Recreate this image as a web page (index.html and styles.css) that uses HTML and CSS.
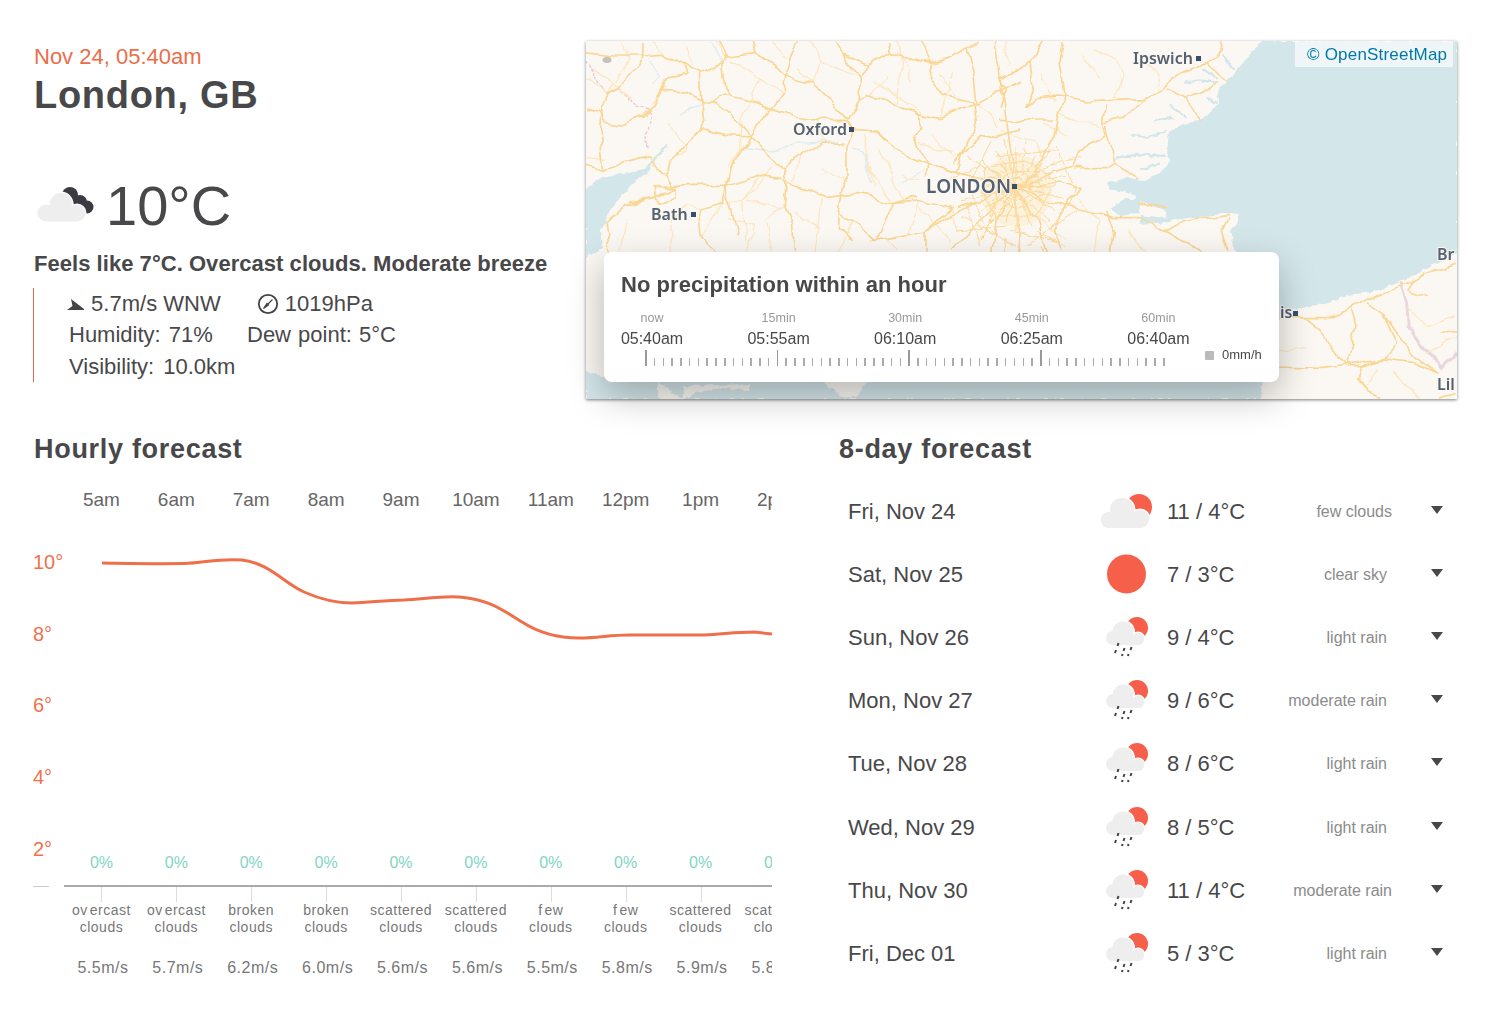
FILE: index.html
```html
<!DOCTYPE html>
<html lang="en">
<head>
    <meta charset="UTF-8">
    <meta name="viewport" content="width=device-width, initial-scale=1.0">
    <title>London, GB weather</title>
    <link rel="stylesheet" href="styles.css">
</head>

<body>
    <svg class="defs" width="0" height="0">
        <filter id="wiggle" x="0" y="0" width="871" height="358" filterUnits="userSpaceOnUse">
            <feTurbulence type="fractalNoise" baseFrequency=".045" numOctaves="2" seed="4"/>
            <feDisplacementMap in="SourceGraphic" scale="11" xChannelSelector="R" yChannelSelector="G"/>
        </filter>
        <filter id="wiggle-fine" x="0" y="0" width="871" height="358" filterUnits="userSpaceOnUse">
            <feTurbulence type="fractalNoise" baseFrequency=".14" numOctaves="2" seed="9"/>
            <feDisplacementMap in="SourceGraphic" scale="5" xChannelSelector="R" yChannelSelector="G"/>
        </filter>
        <symbol id="few-clouds" viewBox="0 0 55 44">
            <circle cx="39" cy="18" r="13" fill="#f65f4a"/>
            <g fill="#eee" stroke="#fff" stroke-width="3" paint-order="stroke">
                <circle cx="22" cy="21" r="12"/>
                <circle cx="9" cy="31" r="8"/>
                <circle cx="40" cy="30" r="9"/>
            </g>
            <g fill="#eee">
                <circle cx="22" cy="21" r="12"/>
                <circle cx="9" cy="31" r="8"/>
                <circle cx="40" cy="30" r="9"/>
                <rect x="9" y="26" width="31" height="13"/>
            </g>
        </symbol>
        <symbol id="rain" viewBox="0 0 55 44">
            <circle cx="37" cy="13" r="11" fill="#f65f4a"/>
            <g fill="#eee" stroke="#fff" stroke-width="3" paint-order="stroke">
                <circle cx="23" cy="17" r="10.5"/>
                <circle cx="38" cy="24" r="6"/>
            </g>
            <g fill="#eee">
                <circle cx="23" cy="17" r="10.5"/>
                <circle cx="13" cy="23" r="7"/>
                <circle cx="38" cy="24" r="6"/>
                <rect x="13" y="20" width="25" height="10"/>
            </g>
            <g stroke="#444" stroke-width="2">
                <path d="M18.5 28l-1 3M16 35l-1 3M24.500 33l-1 3M31.500 32l-1 3M22.500 39l-.5 2M28.500 39l-.5 2"/>
            </g>
        </symbol>
    </svg>

    <main class="page">
        <section class="top">
            <div class="current">
                <div class="date">Nov 24, 05:40am</div>
                <h1 class="city">London, GB</h1>
                <div class="now">
                    <svg class="now-icon" width="66" height="62" viewBox="0 0 66 62">
                        <g fill="#3a3a40">
                            <circle cx="36" cy="20" r="8"/>
                            <circle cx="46" cy="27" r="7"/>
                            <circle cx="53" cy="32" r="6.500"/>
                        </g>
                        <g fill="#eee" stroke="#fff" stroke-width="3" paint-order="stroke">
                            <circle cx="27" cy="29" r="11"/>
                            <circle cx="43" cy="38" r="8"/>
                        </g>
                        <g fill="#eee">
                            <circle cx="27" cy="29" r="11"/>
                            <circle cx="12" cy="38" r="8.500"/>
                            <circle cx="43" cy="38" r="8.500"/>
                            <rect x="12" y="34" width="31" height="12.500"/>
                        </g>
                    </svg>
                    <span class="now-temp">10°C</span>
                </div>
                <div class="feels">Feels like 7°C. Overcast clouds. Moderate breeze</div>
                <div class="details">
                    <div class="detail-row">
                        <span class="wind">
                            <svg width="18" height="12" viewBox="0 0 18 12"><path d="M0 11L5.500 7 4 0 17 10V11Z" fill="#444"/></svg>
                            5.7m/s WNW
                        </span>
                        <span class="pressure">
                            <svg width="22" height="22" viewBox="0 0 22 22">
                                <circle cx="11" cy="11" r="9.200" fill="none" stroke="#444" stroke-width="1.800"/>
                                <path d="M6.500 15.500L10 10.500 11.500 12ZM10.500 11.500L15.500 6.500" fill="#444" stroke="#444" stroke-width="1.200"/>
                            </svg>
                            1019hPa
                        </span>
                    </div>
                    <div class="detail-row">
                        <span class="humidity">Humidity: 71%</span>
                        <span class="dew">Dew point: 5°C</span>
                    </div>
                    <div class="detail-row">
                        <span class="visibility">Visibility: 10.0km</span>
                    </div>
                </div>
            </div>

            <div class="map">
                <svg class="map-canvas" width="871" height="358" viewBox="0 0 871 358">
                    <rect width="871" height="358" class="land"/>
                    <g filter="url(#wiggle-fine)">
                        <path class="sea" d="M676 0L664 13 652 28 641 40 631 50 632 62 624 72 612 80 597 83 584 90 582 110 584 120 574 132 557 139 541 137 521 142 524 148 547 153 551 158 540 158 524 168 535 175 554 172 554 182 574 183 594 178 644 172 654 173 651 183 644 190 647 207 654 212 640 240 600 280 400 320 100 336 17 336 0 329V358H674L680 320 697 269 717 267 751 259 761 254 787 251 814 241 841 227 871 212V0Z"/>
                        <path class="sea" d="M0 147L13 138 37 132 58 128 67 118 80 102 82 105 70 118 63 130 50 140 33 158 23 172 15 190 17 207 0 217Z"/>
                        <path class="land" d="M72 341L88 352 95 358H97L97 345 165 343 163 349 135 347 113 351 97 358 72 358ZM237 341L258 356 270 356 280 341Z"/>
                        <path class="land" d="M554 160L580 170 581 177 554 174Z"/>
                        <!-- inlets -->
                        <path class="inlet" transform="translate(414 0) scale(.3333)" d="M555 125L600 118 650 125M610 85L650 110M670 40L700 90M395 280L440 290 500 270M345 350L420 340 500 345M420 385L480 370M510 190L560 230M460 240L520 230M620 170L650 185M420 545L480 540"/>
                    </g>

                    <g filter="url(#wiggle)">
                        <path class="water" transform="scale(.3333)" d="M190 60L230 110 200 130M470 320L560 330 620 310 750 300M800 320L840 350 860 430M950 420L1010 390M290 220L350 185M370 0L410 70"/>
                        <path class="border" transform="scale(.3333)" d="M0 60L25 110 60 155 100 135 140 175 155 200 190 205 185 330"/>
                        <path class="border-wide" transform="translate(654 199) scale(.3333)" d="M480 130L500 190 505 260 540 310 570 340 610 385 650 340"/>

                        <g class="roads-minor" transform="scale(.3333)">
                            <path d="M640 80L680 130 700 60 670 0M860 120L1000 210M470 230L460 330 420 390M480 480L590 500M560 380L470 480 480 600M600 490L540 540 560 635M620 510L700 560 690 635M850 370L870 440M950 400L1000 420M1000 500L1100 600M300 500L250 540 260 635M350 590L410 490M120 540L100 635M20 90L100 135 140 170M300 20L320 70M390 0L420 60M0 350L60 355M250 110L200 190M1060 100L1120 180M560 0L600 60M930 0L980 120M880 320L950 480M1040 290L1100 350"/>
                            <path d="M100 0L130 60 60 155M200 0L240 40M0 110L60 155M250 250L300 330 270 340M430 60L520 110 590 150M520 110L470 230M700 60L820 115M900 100L860 170M950 50L930 190M1100 100L1060 230M1170 180L1240 260M1000 310L1100 340M700 235L720 310M640 340L620 420M830 280L850 380 920 490M700 380L780 420M520 400L470 480 430 490M340 510L300 500 260 540M420 530L500 550 480 635M700 470L690 560M800 540L760 635M900 590L930 635M1000 480L960 590M1100 500L1120 570"/>
                            <g transform="translate(1242 0)">
                                <path d="M280 30L350 60 370 100 350 170M420 60L480 100 470 150M180 220L300 260M200 280L130 250M0 270L100 300 130 350M240 40L300 110M20 0L30 70M120 100L160 180M240 470L300 540 280 635M90 520L200 600M380 570L440 635"/>
                            </g>
                            <g transform="translate(1962 597)">
                                <path d="M120 330L200 320M500 200L560 260 650 230M380 440L420 380M560 340L650 290M460 400L540 475"/>
                            </g>
                        </g>

                        <g class="roads-major" transform="scale(.3333)">
                            <path d="M0 205L40 215 55 240 110 250 170 230 205 195 230 145 290 150 350 180 380 180 430 165 490 180 550 205 620 225 700 235 780 235 800 265"/>
                            <path d="M165 45L160 70 100 135 60 155 45 205 40 290 45 340 50 385"/>
                            <path d="M0 35L80 45 165 45 230 40 290 70 340 95 410 65 420 145 430 165"/>
                            <path d="M290 70L300 100 255 110 230 145M165 0L165 45M400 0L420 40 410 65"/>
                            <path d="M500 0L510 35 570 75 600 105 680 130 730 175 790 235"/>
                            <path d="M640 0L600 105 590 150 550 205 495 285 440 370 420 430"/>
                            <path d="M380 180L440 225 495 285 550 345 595 385 600 430 595 490 620 550 625 635"/>
                            <path d="M345 185L350 235 340 270 270 340 235 400 260 440"/>
                            <path d="M340 265L420 280 495 285M510 35L420 45M340 95L345 185"/>
                            <path d="M750 0L770 40 820 115 820 180 790 235"/>
                            <path d="M770 40L845 70 910 30 905 0M845 70L820 115"/>
                            <path d="M910 30L960 50 1040 70 1090 55 1140 20 1180 0M1040 70L1005 0"/>
                            <path d="M1040 70L1030 120 1070 160 1170 180 1160 100 1140 20"/>
                            <path d="M820 180L850 170 920 190 990 215 1060 230 1180 180 1250 150 1302 120"/>
                            <path d="M990 215L1010 260 985 290 1020 370 1015 410"/>
                            <path d="M800 265L870 270 920 310 970 350 1020 370 1110 395"/>
                            <path d="M800 265L780 310 780 420 765 490 760 560 800 600"/>
                            <path d="M595 385L640 340 710 310 770 300"/>
                            <path d="M600 420L660 440 720 470 800 460 870 470 920 490 1020 480 1100 500"/>
                            <path d="M420 430L520 400 590 410"/>
                            <path d="M230 435L330 430 420 430 415 490 340 510 350 590 380 635"/>
                            <path d="M190 350L110 370 45 385 0 370M230 400L190 350"/>
                            <path d="M130 480L200 470 270 440 270 475 210 490 205 440 270 440M60 545L120 490 200 470M60 545L70 635"/>
                            <path d="M760 510L800 540 870 600 920 490 990 470M850 600L920 590 1020 570 1100 520 1180 480"/>
                            <path d="M440 370L420 420 430 490 455 590M1160 180L1170 260 1140 300 1110 395M1302 260L1230 290 1180 280 1100 370"/>
                            <path d="M1290 435L1270 300 1250 150 1230 0M1110 500L1180 480 1290 435M1290 435L1180 540 1100 630M1290 435L1230 540 1220 635M1100 500L1020 570 1020 635M1110 395L1290 435"/>
                        </g>
                        <g class="roads-major" transform="translate(414 0) scale(.3333)">
                            <path d="M90 60L100 150 80 200 110 170 175 165 260 180 350 175 430 170 490 150 520 105 580 75 620 65"/>
                            <path d="M190 0L180 60 195 160 170 240 160 300 120 360 100 400 45 435"/>
                            <path d="M440 170L400 200 360 235 310 250 320 280 295 300 240 330 215 375 140 400 45 435"/>
                            <path d="M320 190L310 250M0 235L85 240 160 240M320 255L345 370 330 380 220 380M345 370L410 410"/>
                            <path d="M45 435L100 430 180 420 240 440 190 510 170 570 185 630"/>
                            <path d="M45 435L150 480 280 510 340 530 420 530 490 570 560 540 690 520"/>
                            <path d="M320 510L340 570 330 635M490 570L590 620 610 635M690 530L670 570 690 635"/>
                            <path d="M45 435L60 520 50 635M45 435L110 535 140 635M0 370L45 435M0 120L20 150 0 200M90 60L130 0M90 60L0 120"/>
                            <path d="M500 150L560 175 600 240M560 170L620 150 650 125M620 65L650 50 660 0M620 65L680 120M420 480L500 510"/>
                        </g>
                        <g class="roads-major" transform="translate(654 199) scale(.3333)">
                            <path d="M118 230L190 230 270 230 330 205 385 175 480 140 560 95 650 70"/>
                            <path d="M190 230L240 270 290 340 320 380 370 380 430 360M330 205L345 260 320 375"/>
                            <path d="M60 380L250 385 320 375 430 360 520 370 600 400M380 185L430 220 520 350 600 400"/>
                            <path d="M370 380L350 420 420 475M430 220L470 315 430 360M600 290L650 270M650 460L600 475M520 110L510 150 560 170"/>
                        </g>
                    </g>

                    <!-- london web -->
                    <circle cx="430" cy="150" r="36" class="london-glow"/>
                    <g class="roads-web" filter="url(#wiggle-fine)">
                        <circle cx="430" cy="145" r="9"/><circle cx="430" cy="145" r="15"/>
                        <path d="M395 118L415 140 440 160 465 180M465 108L445 135 420 165 400 185M390 145L470 145M430 105V190M405 160L455 130M405 130L455 160M410 110L422 128M450 115L440 132M395 170L418 155M470 170L445 155M385 135L415 142M480 135L445 142M420 180L428 155M445 185L434 158M375 160L420 150M380 115L415 135M470 120L440 140M440 100L436 135M418 98L426 130M478 158L442 148"/>
                        <path d="M400 125L440 120 470 140 450 175 410 175 395 150ZM412 132L450 130 458 152 432 168 410 158ZM385 150L400 190M470 105L490 150 465 190M405 100L385 140M425 190L470 200M375 175L430 205M440 205L490 170M395 200L410 165M460 125L495 115M360 140L395 125M370 190L420 185M410 115L470 110M380 165L395 205M450 190L480 205M420 200L415 235M455 205L470 240M385 215L440 225"/>
                    </g>

                    <g class="map-labels">
                        <text x="547" y="23" class="place">Ipswich</text>
                        <rect x="610" y="15" width="5" height="5"/>
                        <text x="207" y="94" class="place">Oxford</text>
                        <rect x="263" y="86" width="5" height="5"/>
                        <text x="340" y="152" class="place capital">LONDON</text>
                        <rect x="426" y="143" width="5" height="5"/>
                        <text x="65" y="179" class="place">Bath</text>
                        <rect x="105" y="171" width="5" height="5"/>
                        <text x="851" y="219" class="place">Br</text>
                        <text x="694" y="277" class="place">is</text>
                        <rect x="707" y="270" width="5" height="5"/>
                        <text x="851" y="349" class="place">Lil</text>
                    </g>
                    <ellipse cx="21" cy="19" rx="4.500" ry="3" fill="#c4c0bc"/>
                </svg>

                <div class="attribution">© OpenStreetMap</div>

                <div class="minutely">
                    <h3 class="minutely-title">No precipitation within an hour</h3>
                    <div class="minutely-times">
                        <div class="slot"><span class="slot-label">now</span><span>05:40am</span></div>
                        <div class="slot"><span class="slot-label">15min</span><span>05:55am</span></div>
                        <div class="slot"><span class="slot-label">30min</span><span>06:10am</span></div>
                        <div class="slot"><span class="slot-label">45min</span><span>06:25am</span></div>
                        <div class="slot"><span class="slot-label">60min</span><span>06:40am</span></div>
                    </div>
                    <div class="ticks"></div>
                    <div class="legend"><span class="legend-dot"></span>0mm/h</div>
                </div>
            </div>
        </section>

        <section class="bottom">
            <div class="hourly">
                <h2>Hourly forecast</h2>
                <div class="chart">
                    <div class="y-axis">
                        <div class="y-label">10°</div>
                        <div class="y-label">8°</div>
                        <div class="y-label">6°</div>
                        <div class="y-label">4°</div>
                        <div class="y-label">2°</div>
                        <div class="y-tick"></div>
                    </div>
                    <div class="plot">
                        <div class="cols hours">
                            <span>5am</span><span>6am</span><span>7am</span><span>8am</span><span>9am</span>
                            <span>10am</span><span>11am</span><span>12pm</span><span>1pm</span><span>2pm</span>
                        </div>
                        <div class="curve">
                            <svg width="708" height="373" viewBox="0 0 708 373">
                                <path d="M38 50C70 50.500 90 51 120 50.500 C140 50 155 45 178 47 C205 50 220 70 240 79 C258 87 272 90 288 90 C305 90 320 87 340 87 C360 86 375 83 395 84 C425 86 440 98 458 109 C475 120 495 125 515 125 C535 125 545 122 565 122 L640 122 C660 121 672 119 690 119 L708 121" fill="none" stroke="#ef6f4a" stroke-width="3"/>
                            </svg>
                            <div class="cols precip">
                                <span>0%</span><span>0%</span><span>0%</span><span>0%</span><span>0%</span>
                                <span>0%</span><span>0%</span><span>0%</span><span>0%</span><span>0%</span>
                            </div>
                        </div>
                        <div class="cols conditions">
                            <span><b>o<i>v</i>ercast</b> clouds</span><span><b>o<i>v</i>ercast</b> clouds</span><span>broken clouds</span><span>broken clouds</span><span>scattered clouds</span>
                            <span>scattered clouds</span><span><b><i>f</i>ew</b> clouds</span><span><b><i>f</i>ew</b> clouds</span><span>scattered clouds</span><span>scattered clouds</span>
                        </div>
                        <div class="cols winds">
                            <span>5.5m/s</span><span>5.7m/s</span><span>6.2m/s</span><span>6.0m/s</span><span>5.6m/s</span>
                            <span>5.6m/s</span><span>5.5m/s</span><span>5.8m/s</span><span>5.9m/s</span><span>5.8m/s</span>
                        </div>
                    </div>
                </div>
            </div>

            <div class="daily">
                <h2>8-day forecast</h2>
                <ul class="days">
                    <li class="day">
                        <span>Fri, Nov 24</span>
                        <svg class="day-icon"><use href="#few-clouds"/></svg>
                        <span>11 / 4°C</span>
                        <span class="desc wide">few clouds</span>
                        <span class="arrow"></span>
                    </li>
                    <li class="day">
                        <span>Sat, Nov 25</span>
                        <svg class="day-icon" viewBox="0 0 55 44"><circle cx="26.500" cy="22" r="19.500" fill="#f65f4a"/></svg>
                        <span>7 / 3°C</span>
                        <span class="desc">clear sky</span>
                        <span class="arrow"></span>
                    </li>
                    <li class="day">
                        <span>Sun, Nov 26</span>
                        <svg class="day-icon"><use href="#rain"/></svg>
                        <span>9 / 4°C</span>
                        <span class="desc">light rain</span>
                        <span class="arrow"></span>
                    </li>
                    <li class="day">
                        <span>Mon, Nov 27</span>
                        <svg class="day-icon"><use href="#rain"/></svg>
                        <span>9 / 6°C</span>
                        <span class="desc">moderate rain</span>
                        <span class="arrow"></span>
                    </li>
                    <li class="day">
                        <span>Tue, Nov 28</span>
                        <svg class="day-icon"><use href="#rain"/></svg>
                        <span>8 / 6°C</span>
                        <span class="desc">light rain</span>
                        <span class="arrow"></span>
                    </li>
                    <li class="day">
                        <span>Wed, Nov 29</span>
                        <svg class="day-icon"><use href="#rain"/></svg>
                        <span>8 / 5°C</span>
                        <span class="desc">light rain</span>
                        <span class="arrow"></span>
                    </li>
                    <li class="day">
                        <span>Thu, Nov 30</span>
                        <svg class="day-icon"><use href="#rain"/></svg>
                        <span>11 / 4°C</span>
                        <span class="desc wide">moderate rain</span>
                        <span class="arrow"></span>
                    </li>
                    <li class="day">
                        <span>Fri, Dec 01</span>
                        <svg class="day-icon"><use href="#rain"/></svg>
                        <span>5 / 3°C</span>
                        <span class="desc">light rain</span>
                        <span class="arrow"></span>
                    </li>
                </ul>
            </div>
        </section>
    </main>
</body>
</html>
```

FILE: styles.css
```css
*{
    margin: 0;
    padding: 0;
    box-sizing: border-box;
}
body{
    font-family: "Liberation Sans", Arial, sans-serif;
    color: #48484a;
    background-color: #fff;
    overflow: hidden;
}
.defs{
    position: absolute;
}
.page{
    width: 1506px;
    height: 1024px;
    padding: 41px 49px 0 34px;
}
.top{
    display: flex;
    height: 358px;
}
.current{
    width: 552px;
}
.date{
    font-size: 22px;
    line-height: 31px;
    color: #eb6e4b;
}
.city{
    font-size: 38px;
    line-height: 47px;
    font-weight: 700;
    letter-spacing: .7px;
}
.now{
    display: flex;
    align-items: center;
    height: 62px;
    margin-top: 56px;
}
.now-icon{
    width: 66px;
    margin-right: 6px;
}
.now-temp{
    font-size: 56px;
    line-height: 62px;
}
.feels{
    margin-top: 12px;
    font-size: 22px;
    line-height: 30px;
    font-weight: 700;
    letter-spacing: .04px;
}
.details{
    margin-top: 9px;
    margin-left: -1px;
    height: 94px;
    padding-left: 35px;
    border-left: 1px solid #e0694f;
    font-size: 22px;
}
.detail-row{
    display: flex;
    height: 31px;
    line-height: 31px;
}
.detail-row + .detail-row + .detail-row{
    margin-top: 1px;
}
.wind svg{
    margin-left: -2px;
}
.pressure{
    margin-left: 36px;
}
.pressure svg{
    vertical-align: -4px;
}
.humidity{
    width: 178px;
    word-spacing: 2px;
}
.dew{
    word-spacing: 1px;
}
.visibility{
    word-spacing: 3px;
}

/* map */
.map{
    position: relative;
    width: 871px;
    height: 358px;
    box-shadow: 0 1px 3px rgba(0, 0, 0, .5);
}
.map-canvas{
    display: block;
    filter: blur(.6px);
}
.sea{
    fill: #d3e6ea;
}
.land{
    fill: #fbf8f3;
}
.water{
    fill: none;
    stroke: #dcecef;
    stroke-width: 4;
}
.inlet{
    fill: none;
    stroke: #d3e6ea;
    stroke-width: 7;
}
.border{
    fill: none;
    stroke: #e3c6cf;
    stroke-width: 4;
    stroke-dasharray: 10 5;
}
.border-wide{
    fill: none;
    stroke: #ead7dd;
    stroke-width: 9;
}
.roads-major, .roads-minor, .roads-web{
    fill: none;
    stroke-linejoin: round;
}
.roads-major{
    stroke: #fad694;
    stroke-width: 5;
}
.roads-minor{
    stroke: #fde6bd;
    stroke-width: 3.500;
}
.roads-web{
    stroke: #fbd896;
    stroke-width: 1;
}
.london-glow{
    fill: #fbe0ab;
    opacity: .3;
}
.map-labels rect{
    fill: #35506e;
}
.place{
    font-family: "Noto Sans", sans-serif;
    font-size: 16px;
    font-weight: 600;
    fill: #566170;
    stroke: #fbf8f3;
    stroke-width: 2px;
    paint-order: stroke;
}
.capital{
    font-size: 19px;
    letter-spacing: .2px;
}
.attribution{
    position: absolute;
    top: 0;
    right: 4px;
    width: 158px;
    height: 26px;
    padding-left: 12px;
    font-size: 17px;
    line-height: 28px;
    letter-spacing: .2px;
    color: #0078a8;
    background-color: rgba(255, 255, 255, .65);
}
.minutely{
    position: absolute;
    left: 18px;
    top: 211px;
    width: 675px;
    height: 130px;
    padding: 17px;
    background-color: #fff;
    border-radius: 8px;
    box-shadow: 0 14px 36px rgba(0, 0, 0, .27);
}
.minutely-title{
    font-size: 22px;
    line-height: 32px;
    font-weight: 700;
    letter-spacing: .06px;
}
.minutely-times{
    display: flex;
    gap: 64.600px;
    margin-top: 10px;
}
.slot{
    display: flex;
    flex-direction: column;
    align-items: center;
    width: 62px;
    font-size: 16px;
    line-height: 26px;
}
.slot-label{
    font-size: 12.500px;
    line-height: 15px;
    color: #999;
}
.ticks{
    position: absolute;
    left: 41px;
    bottom: 16px;
    width: 524px;
    height: 16px;
    background-image:
        repeating-linear-gradient(90deg, #999 0 1.500px, transparent 1.500px 131.700px),
        repeating-linear-gradient(90deg, #aaa 0 1.500px, transparent 1.500px 8.780px);
    background-size: 100% 16px, 100% 8px;
    background-position: 0 0, 0 8px;
    background-repeat: no-repeat;
}
.legend{
    position: absolute;
    left: 601px;
    top: 96px;
    display: flex;
    align-items: center;
    gap: 8px;
    font-size: 13px;
    line-height: 14px;
}
.legend-dot{
    width: 9px;
    height: 9px;
    border-radius: 1px;
    background-color: #bbb;
}

/* bottom */
.bottom{
    display: flex;
    margin-top: 34px;
}
h2{
    font-size: 27px;
    line-height: 32px;
    font-weight: 700;
    letter-spacing: .7px;
}
.hourly{
    width: 738px;
    margin-right: 67px;
}
.chart{
    display: flex;
    margin-top: 20px;
}
.y-axis{
    display: flex;
    flex-direction: column;
    gap: 51.700px;
    width: 30px;
    margin-left: -1px;
    padding-top: 67px;
    flex-shrink: 0;
    color: #f0714d;
    font-size: 20px;
}
.y-label{
    line-height: 20px;
}
.y-tick{
    width: 16px;
    height: 1px;
    margin-top: -24px;
    background-color: #ccc;
}
.plot{
    width: 709px;
    overflow: hidden;
    margin-left: 1px;
}
.cols{
    display: grid;
    grid-template-columns: repeat(10, 74.900px);
    text-align: center;
}
.hours{
    height: 29px;
    line-height: 29px;
    font-size: 19px;
    color: #666;
}
.curve{
    position: relative;
    height: 374px;
    border-bottom: 2px solid #aaa;
}
.curve svg{
    display: block;
    margin-top: -1px;
}
.precip{
    position: absolute;
    left: 0;
    top: 340px;
    font-size: 16px;
    line-height: 20px;
    color: #7fd6c4;
}
.conditions{
    font-size: 14px;
    line-height: 17px;
    letter-spacing: .5px;
    color: #777;
    height: 50px;
}
.conditions span{
    position: relative;
    padding: 15px 6px 0;
}
.conditions span::before{
    content: "";
    position: absolute;
    left: 50%;
    top: 0;
    width: 1px;
    height: 15px;
    background-color: #ddd;
}
.conditions b{
    display: block;
    font-weight: 400;
}
.conditions i{
    font-style: normal;
    margin-right: 2px;
}
.winds{
    margin-top: 21px;
    font-size: 16px;
    line-height: 20px;
    letter-spacing: .5px;
    color: #777;
}
.winds span{
    padding-left: 3px;
}

/* daily */
.daily{
    width: 618px;
}
.days{
    list-style: none;
    margin-top: 15.500px;
    padding-left: 9px;
}
.day{
    display: grid;
    grid-template-columns: 252px 67px 120px 100px 44px 13px;
    align-items: center;
    height: 63.100px;
    font-size: 22px;
}
.day-icon{
    width: 55px;
    height: 44px;
    margin-top: -2px;
}
.desc{
    grid-column: 4;
    text-align: right;
    font-size: 16px;
    color: #8b8b8b;
    white-space: nowrap;
}
.desc.wide{
    margin-right: -5px;
}
.arrow{
    grid-column: 6;
    width: 0;
    height: 0;
    margin-top: -4px;
    border-left: 6.500px solid transparent;
    border-right: 6.500px solid transparent;
    border-top: 8px solid #484848;
}
```
